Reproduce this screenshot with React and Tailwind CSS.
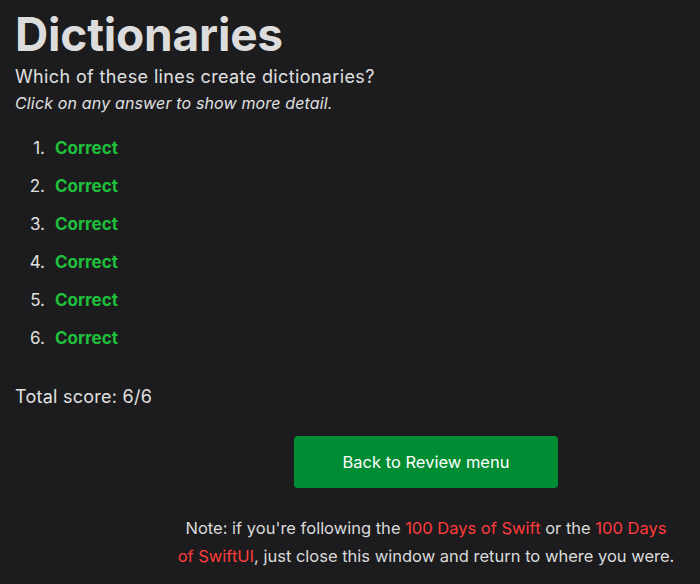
export default function App() {
  const items = [1, 2, 3, 4, 5, 6];
  return (
    <div className="min-h-[584px] w-[700px] bg-[#1c1c1e] text-[#e0e0e0] font-['Inter',sans-serif] px-[15px] pt-[6px]">
      <h1 className="text-[46px] leading-[56px] font-bold tracking-[-0.2px] text-[#dcdcdc]">Dictionaries</h1>
      <p className="text-[18px] leading-[26px] mt-[2px] tracking-[0.37px]">Which of these lines create dictionaries?</p>
      <p className="text-[16px] leading-[24px] italic mt-[1px] tracking-[0.15px]">Click on any answer to show more detail.</p>

      <ol className="mt-[21px] flex flex-col gap-[14px]">
        {items.map((n) => (
          <li key={n} className="flex items-baseline text-[17px] leading-[24px]">
            <span className="w-[30px] text-right">{n}.</span>
            <span className="ml-[10px] font-bold text-[#1fc03b]">Correct</span>
          </li>
        ))}
      </ol>

      <p className="mt-[34px] text-[18px] leading-[26px] tracking-[0.25px]">Total score: 6/6</p>

      <div className="pl-[155px] pr-[3px] flex flex-col items-center mt-[26px]">
        <button className="w-[264px] h-[52px] rounded-[4px] bg-[#008c33] text-white text-[16.5px]">
          Back to Review menu
        </button>
        <p className="mt-[26px] text-center text-[16.5px] leading-[28px] text-[#dadada]">
          Note: if you're following the <span className="text-[#ff3b3b]">100 Days of Swift</span> or the{" "}
          <span className="text-[#ff3b3b]">100 Days</span>
          <br />
          <span className="text-[#ff3b3b]">of SwiftUI</span>, just close this window and return to where you were.
        </p>
      </div>
    </div>
  );
}
